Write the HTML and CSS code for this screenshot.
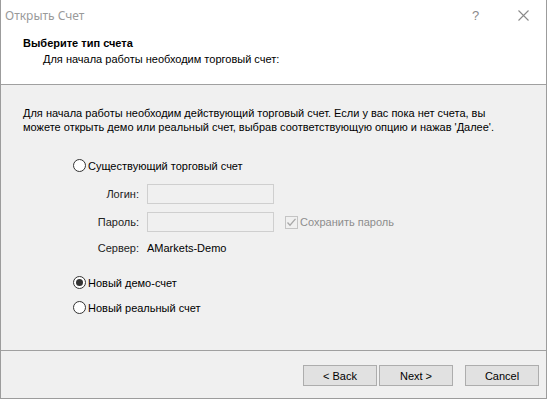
FILE: index.html
```html
<!DOCTYPE html>
<html>
<head>
<meta charset="utf-8">
<link rel="stylesheet" href="styles.css">
</head>
<body>
<div class="window">
  <div class="top">
    <div class="titlebar">
      <span class="title">Открыть Счет</span>
      <span class="tb-help">?</span>
      <span class="tb-close">
        <svg width="11" height="11" viewBox="0 0 11 11"><path d="M0.5 0.5L10.5 10.5M10.5 0.5L0.5 10.5" stroke="#8a8a8a" stroke-width="1.1" fill="none"/></svg>
      </span>
    </div>
    <div class="header">
      <div class="h-title">Выберите тип счета</div>
      <div class="h-sub">Для начала работы необходим торговый счет:</div>
    </div>
  </div>
  <div class="content">
    <p class="intro">Для начала работы необходим действующий торговый счет. Если у вас пока нет счета, вы<br>можете открыть демо или реальный счет, выбрав соответствующую опцию и нажав 'Далее'.</p>
    <div class="options">
      <div class="radio-row"><span class="radio"></span><span>Существующий торговый счет</span></div>
      <div class="form">
        <span class="lbl">Логин:</span><span class="input"></span><span></span>
        <span class="lbl">Пароль:</span><span class="input"></span>
        <span class="check-wrap"><span class="check"><svg width="11" height="11" viewBox="0 0 11 11"><path d="M1.5 5.5L4 8.2L9.5 1.8" stroke="#a8a8a8" stroke-width="1.3" fill="none"/></svg></span><span class="disabled">Сохранить пароль</span></span>
        <span class="lbl">Сервер:</span><span class="server">AMarkets-Demo</span><span></span>
      </div>
      <div class="radio-row demo"><span class="radio on"></span><span>Новый демо-счет</span></div>
      <div class="radio-row real"><span class="radio"></span><span>Новый реальный счет</span></div>
    </div>
  </div>
  <div class="footer">
    <button class="btn">&lt; Back</button>
    <button class="btn">Next &gt;</button>
    <button class="btn cancel">Cancel</button>
  </div>
</div>
</body>
</html>
```

FILE: styles.css
```css
html, body {
  margin: 0;
  padding: 0;
  background: #ffffff;
}
body {
  font-family: "Liberation Sans", Arial, sans-serif;
  font-size: 11px;
  color: #000;
}
.window {
  width: 545px;
  height: 398px;
  border-left: 1px solid #9c9c9c;
  border-right: 1px solid #9c9c9c;
  border-bottom: 1px solid #9c9c9c;
  display: flex;
  flex-direction: column;
  background: #f0f0f0;
}
.top {
  background: #fff;
  height: 84px;
  border-bottom: 1px solid #a0a0a0;
  display: flex;
  flex-direction: column;
}
.titlebar {
  height: 30px;
  display: flex;
  align-items: center;
  padding-left: 4px;
}
.title {
  font-family: "Noto Sans", "Liberation Sans", sans-serif;
  font-size: 12px;
  color: #9a9a9a;
  flex: 1;
}
.tb-help {
  font-size: 13px;
  color: #8a8a8a;
  width: 12px;
  margin-right: 34px;
}
.tb-close {
  display: flex;
  margin-right: 17px;
}
.header {
  padding-left: 22px;
  padding-top: 6px;
}
.h-title {
  font-weight: bold;
  line-height: 14px;
}
.h-sub {
  padding-left: 20px;
  line-height: 14px;
  margin-top: 2px;
}
.content {
  height: 265px;
  border-bottom: 1px solid #a0a0a0;
  padding-left: 22px;
}
.intro {
  margin: 21px 0 0 0;
  line-height: 14px;
}
.options {
  margin-left: 50px;
  margin-top: 23px;
}
.radio-row {
  display: flex;
  align-items: center;
  height: 17px;
  gap: 2px;
}
.radio {
  width: 11px;
  height: 11px;
  border: 1px solid #333;
  border-radius: 50%;
  background: #fff;
  display: flex;
  align-items: center;
  justify-content: center;
}
.radio.on::after {
  content: "";
  width: 7px;
  height: 7px;
  border-radius: 50%;
  background: #333;
}
.form {
  display: grid;
  grid-template-columns: 66px 127px auto;
  column-gap: 8px;
  row-gap: 8px;
  align-items: center;
  margin-top: 10px;
}
.lbl {
  text-align: right;
  color: #222;
}
.input {
  height: 18px;
  border: 1px solid #cfcfcf;
  background: #f0f0f0;
}
.server {
  height: 16px;
  line-height: 16px;
}
.check-wrap {
  display: flex;
  align-items: center;
  gap: 2px;
  margin-left: 3px;
}
.check {
  width: 11px;
  height: 11px;
  border: 1px solid #c4c4c4;
  background: #f0f0f0;
  display: flex;
}
.disabled {
  color: #8d8d8d;
}
.demo {
  margin-top: 18px;
}
.real {
  margin-top: 8px;
}
.footer {
  flex: 1;
  display: flex;
  align-items: flex-start;
  padding-top: 14px;
  padding-left: 302px;
}
.btn {
  width: 74px;
  height: 21px;
  margin: 0;
  padding: 0;
  border: 1px solid #adadad;
  background: #e1e1e1;
  font-family: "Liberation Sans", Arial, sans-serif;
  font-size: 11px;
  color: #000;
  margin-right: 2px;
}
.btn.cancel {
  margin-left: 10px;
}
```
